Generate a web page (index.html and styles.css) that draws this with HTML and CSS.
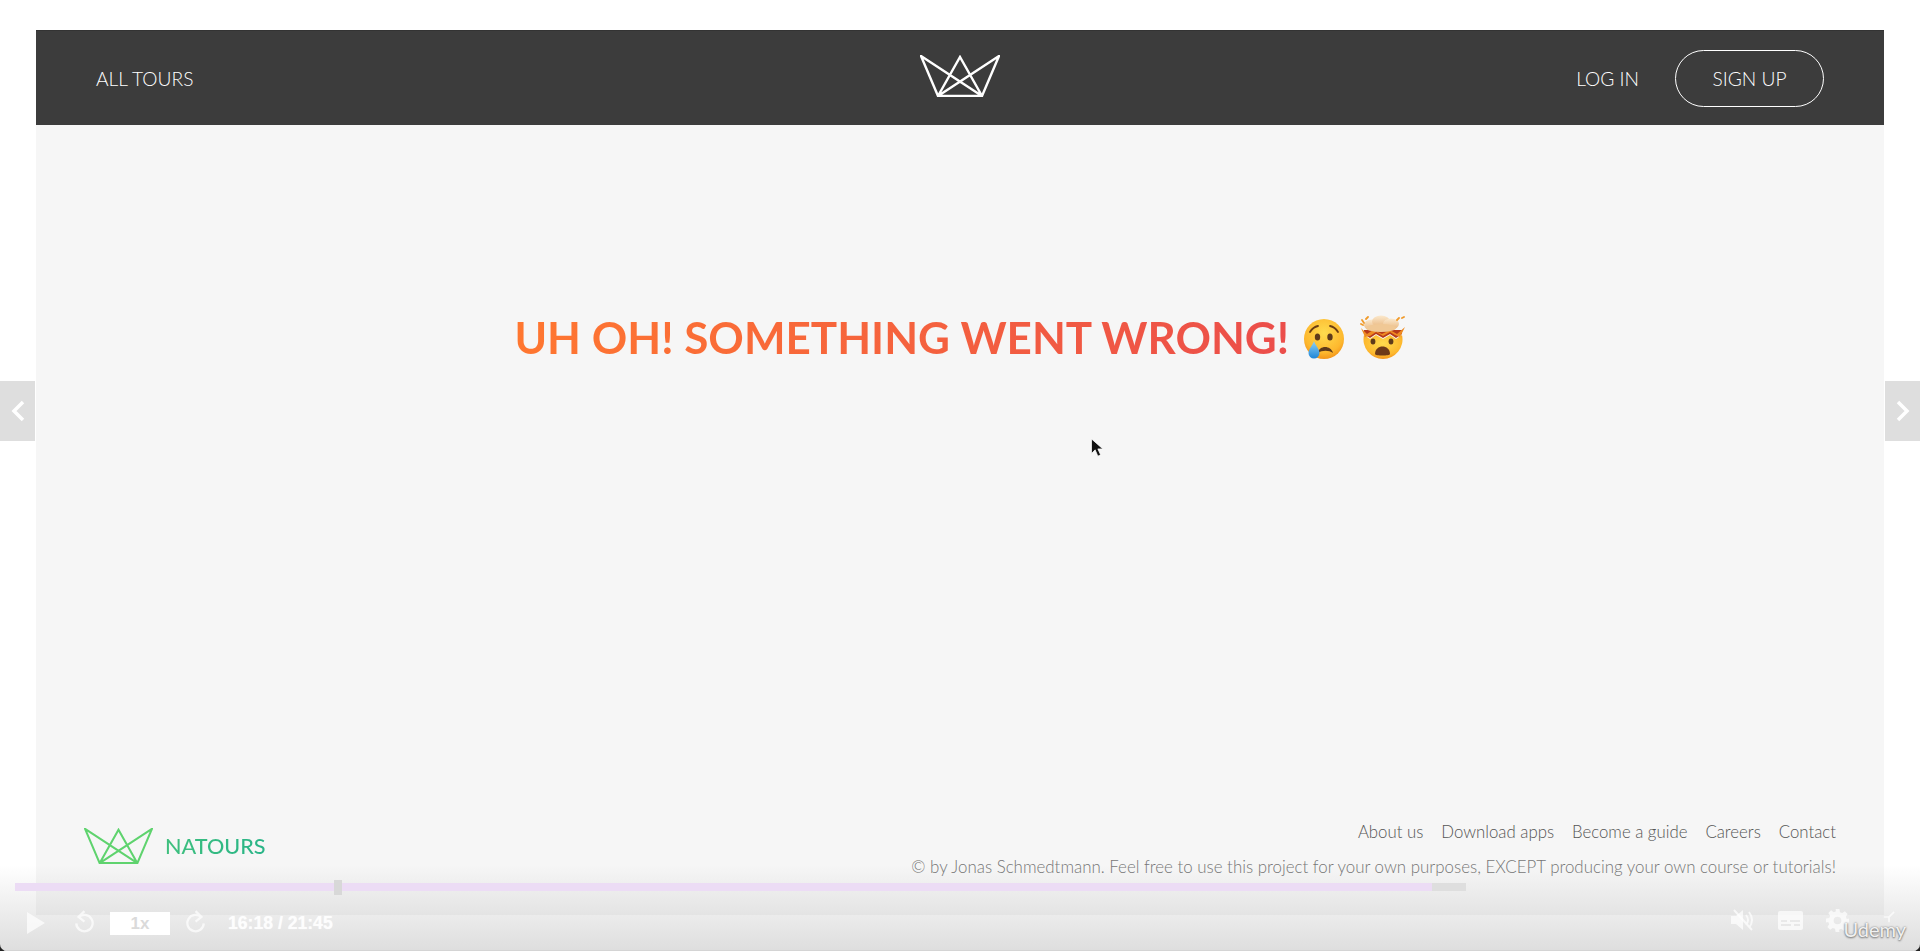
FILE: index.html
```html
<!DOCTYPE html>
<html lang="en">
<head>
<meta charset="utf-8">
<title>Natours | Something went wrong</title>
<link rel="stylesheet" href="styles.css">
</head>
<body>
<svg class="defs" width="0" height="0" aria-hidden="true">
  <defs>
    <symbol id="crown" viewBox="0 0 80 42">
      <path d="M1 1 18 41H62L79 1 18 41 40 2 62 41Z" fill="none" stroke="currentColor" stroke-width="2.400" stroke-linejoin="miter"/>
    </symbol>
    <radialGradient id="skin" cx=".5" cy=".35" r=".7">
      <stop offset="0" stop-color="#ffdc4e"/><stop offset=".7" stop-color="#fdb82e"/><stop offset="1" stop-color="#f08a14"/>
    </radialGradient>
    <linearGradient id="tear" x1="0" y1="0" x2="0" y2="1">
      <stop offset="0" stop-color="#8fd2f5"/><stop offset="1" stop-color="#1f86d8"/>
    </linearGradient>
    <linearGradient id="blast" x1="0" y1="0" x2="0" y2="1">
      <stop offset="0" stop-color="#fbe9cd"/><stop offset="1" stop-color="#e9b67e"/>
    </linearGradient>
  </defs>
</svg>

<div class="page">
  <header class="top">
    <a class="top-link">ALL TOURS</a>
    <svg class="top-logo"><use href="#crown"/></svg>
    <nav class="top-actions">
      <a class="top-link">LOG IN</a>
      <a class="top-link signup">SIGN UP</a>
    </nav>
  </header>

  <main class="main">
    <h2 class="error-title">UH OH! SOMETHING WENT WRONG!
      <svg class="emoji" viewBox="0 0 42 42" aria-hidden="true">
        <circle cx="21" cy="21" r="20" fill="url(#skin)"/>
        <path d="M7 14q3-5 8-6M35 14q-3-5-8-6" fill="none" stroke="#6b3d12" stroke-width="1.800" stroke-linecap="round"/>
        <ellipse cx="14.500" cy="19" rx="2.700" ry="3.600" fill="#5f3a1a"/>
        <ellipse cx="27" cy="19" rx="2.700" ry="3.600" fill="#5f3a1a"/>
        <path d="M15 35c1-8 13-8 15 0-4-3-11-3-15 0Z" fill="#5f3a1a"/>
        <path d="M11 23C10 27 5.500 31 5.500 35a5.500 5.500 0 0 0 11 0C16.500 31 12 27 11 23Z" fill="url(#tear)"/>
      </svg>
      <svg class="emoji emoji-wide" viewBox="0 0 46 44" aria-hidden="true">
        <path d="M4 20A19.500 19.500 0 1 0 42 20L36 24 30 20 23 24 16 20 10 24Z" fill="url(#skin)"/>
        <path d="M4 19 10 23 16 19 23 23 30 19 36 23 42 19 42 15 4 15Z" fill="#b6391a"/>
        <path d="M1 13 7 19 13 15 22 19 30 15 37 19 45 12 40 22 35 20 30 17 23 21 16 17 10 21 5 22Z" fill="#ee8a22"/>
        <ellipse cx="12" cy="10" rx="8" ry="5.500" fill="url(#blast)"/>
        <ellipse cx="21" cy="6.500" rx="9" ry="6" fill="url(#blast)"/>
        <ellipse cx="31" cy="9" rx="8" ry="5.500" fill="url(#blast)"/>
        <ellipse cx="21" cy="13" rx="15" ry="4" fill="#f0c895"/>
        <path d="M2 5l2 3M8 2 6 4M39 3l-2 2M44 2l-2 1M1 9l2 1" stroke="#f09a2a" stroke-width="1.800" stroke-linecap="round"/>
        <ellipse cx="13" cy="26.500" rx="2.400" ry="3" fill="#5f3a1a"/>
        <ellipse cx="31" cy="26.500" rx="2.400" ry="3" fill="#5f3a1a"/>
        <path d="M15 39c0-10 15-10 15 0 0 2-15 2-15 0Z" fill="#6e3a18"/>
      </svg>
    </h2>
  </main>

  <footer class="foot">
    <div class="foot-brand">
      <svg class="foot-logo"><use href="#crown"/></svg>
      <span class="foot-name">NATOURS</span>
    </div>
    <div class="foot-info">
      <ul class="foot-nav">
        <li>About us</li>
        <li>Download apps</li>
        <li>Become a guide</li>
        <li>Careers</li>
        <li>Contact</li>
      </ul>
      <p class="foot-copy">© by Jonas Schmedtmann. Feel free to use this project for your own purposes, EXCEPT producing your own course or tutorials!</p>
    </div>
  </footer>
</div>

<div class="side side-left">
  <svg viewBox="0 0 14 22" class="chev"><path d="M12 2 3 11l9 9" fill="none" stroke="currentColor" stroke-width="3.500"/></svg>
</div>
<div class="side side-right">
  <svg viewBox="0 0 14 22" class="chev"><path d="M2 2l9 9-9 9" fill="none" stroke="currentColor" stroke-width="3.500"/></svg>
</div>

<svg class="cursor" viewBox="0 0 14 22" aria-hidden="true"><path d="M1.500 1v16l4-4 3 7 3-1.500-3-6.500h5.500Z" fill="#111" stroke="#fff" stroke-width=".8"/></svg>

<div class="player">
  <div class="progress">
    <div class="progress-fill"></div>
    <div class="progress-handle"></div>
  </div>
  <div class="controls">
    <svg class="ctl ctl-play" viewBox="0 0 18 22"><path d="M0 0v22l18-11Z" fill="currentColor"/></svg>
    <svg class="ctl ctl-replay" viewBox="0 0 22 24"><path d="M5 7a9 9 0 1 1-2.500 6.500M11.500 0 5 6.500l6.500 5" fill="none" stroke="currentColor" stroke-width="2.500"/></svg>
    <div class="speed">1x</div>
    <svg class="ctl ctl-forward" viewBox="0 0 22 24"><path d="M17 7a9 9 0 1 0 2.500 6.500M10.500 0 17 6.500l-6.500 5" fill="none" stroke="currentColor" stroke-width="2.500"/></svg>
    <span class="time">16:18 / 21:45</span>
    <div class="controls-right">
      <svg class="ctl ctl-mute" viewBox="0 0 23 22"><path d="M0 7v8h5l7 6V1L5 7Z" fill="currentColor"/><path d="M15 6q4 5 0 10M18 3q6 8 0 16M3 1l18 20" fill="none" stroke="currentColor" stroke-width="2"/></svg>
      <svg class="ctl ctl-cc" viewBox="0 0 25 19"><path fill-rule="evenodd" d="M2 0h21a2 2 0 0 1 2 2v15a2 2 0 0 1-2 2H2a2 2 0 0 1-2-2V2a2 2 0 0 1 2-2ZM3 9v2h6V9Zm9 0v2h10V9ZM3 13v2h10v-2Zm13 0v2h6v-2Z" fill="currentColor"/></svg>
      <svg class="ctl ctl-gear" viewBox="0 0 24 24"><path fill-rule="evenodd" d="M10 0h4l.6 3.300 2.300 1 2.800-1.900 2.900 2.900-1.900 2.800 1 2.300L24 10v4l-3.300.6-1 2.300 1.900 2.800-2.900 2.900-2.800-1.900-2.300 1L14 24h-4l-.6-3.300-2.300-1-2.800 1.900-2.900-2.900 1.900-2.800-1-2.300L0 14v-4l3.300-.6 1-2.300-1.900-2.800 2.900-2.900 2.800 1.900 2.300-1ZM12 8a4 4 0 1 0 0 8 4 4 0 0 0 0-8Z" fill="currentColor"/></svg>
      <svg class="ctl ctl-full" viewBox="0 0 14 14"><path d="M13 1 6 8M1 7h6v6" fill="none" stroke="currentColor" stroke-width="2"/></svg>
    </div>
  </div>
  <span class="udemy">Udemy</span>
</div>
</body>
</html>
```
FILE: styles.css
```css
* { box-sizing: border-box; }

html, body { height: 100%; margin: 0; }

html { background: #222; }

body {
  position: relative;
  overflow: hidden;
  height: 951px;
  padding: 30px 36px 36px;
  background: #fff;
  border-radius: 0 0 7px 7px;
  font-family: Lato, "Liberation Sans", sans-serif;
}

.defs { position: absolute; }

.page {
  display: flex;
  flex-direction: column;
  height: 885px;
  background: #f6f6f6;
}

.top {
  display: grid;
  grid-template-columns: 1fr auto 1fr;
  align-items: center;
  flex: 0 0 95px;
  padding: 0 60px;
  background: #3c3c3c;
  border-top: 1px solid #333;
  color: #fff;
}

.top-link {
  font-size: 19.2px;
  font-weight: 300;
  color: #fff;
}

.top-logo {
  width: 80px;
  height: 42px;
  color: #fff;
  margin-top: -4px;
}

.top-actions {
  display: flex;
  justify-content: flex-end;
  align-items: center;
  gap: 36px;
}

.signup {
  display: flex;
  align-items: center;
  justify-content: center;
  width: 149px;
  height: 57px;
  border: 1px solid #fff;
  border-radius: 29px;
}

.main {
  flex: 1;
  display: flex;
  justify-content: center;
  padding-top: 179px;
}

.error-title {
  margin: 0;
  height: 66px;
  font-size: 44px;
  line-height: 66px;
  font-weight: 700;
  white-space: nowrap;
  background: linear-gradient(to right, #ff7730, #eb4d4b 88%);
  -webkit-background-clip: text;
  background-clip: text;
  color: transparent;
}

.emoji {
  width: 42px;
  height: 42px;
  margin-left: 3px;
  vertical-align: -6px;
}

.emoji-wide {
  width: 46px;
  height: 44px;
  margin-left: 4px;
  vertical-align: -5px;
}

.foot {
  display: flex;
  justify-content: space-between;
  padding: 0 48px 36px;
}

.foot-brand {
  display: flex;
  align-items: center;
  gap: 12px;
  height: 35px;
  margin-top: 8px;
}

.foot-logo {
  width: 69px;
  height: 36px;
  color: #5fd36e;
}

.foot-name {
  font-size: 21.6px;
  font-weight: 500;
  background: linear-gradient(to right, #3fc07e, #28b487);
  -webkit-background-clip: text;
  background-clip: text;
  color: transparent;
}

.foot-info {
  display: flex;
  flex-direction: column;
  align-items: flex-end;
  gap: 11px;
}

.foot-nav {
  display: flex;
  gap: 18px;
  margin: 0;
  padding: 0;
  list-style: none;
  font-size: 16.8px;
  font-weight: 300;
  line-height: 24px;
  color: #555;
}

.foot-copy {
  margin: 0;
  font-size: 16.9px;
  font-weight: 300;
  line-height: 24px;
  color: #777;
}

.side {
  position: absolute;
  top: 381px;
  display: flex;
  align-items: center;
  justify-content: center;
  width: 35px;
  height: 60px;
  background: #dedede;
  color: #fff;
}

.side-left { left: 0; }
.side-right { right: 0; }

.chev {
  width: 14px;
  height: 22px;
}

.cursor {
  position: absolute;
  left: 1090px;
  top: 438px;
  width: 13px;
  height: 20px;
}

.player {
  position: absolute;
  left: 0;
  right: 0;
  bottom: 0;
  height: 86px;
  padding: 18px 0 0 15px;
  background: linear-gradient(to bottom, rgba(90, 90, 90, 0), rgba(90, 90, 90, .2));
  border-bottom: 1px solid #d4d4d4;
  color: rgba(255, 255, 255, .7);
}

.progress {
  position: relative;
  width: 1451px;
  height: 8px;
  background: #dedede;
}

.progress-fill {
  height: 8px;
  width: 1417px;
  background: #ecdcf5;
}

.progress-handle {
  position: absolute;
  left: 319px;
  top: -3px;
  width: 8px;
  height: 15px;
  background: #d8d8d8;
}

.controls {
  display: flex;
  align-items: center;
  height: 30px;
  margin-top: 17px;
  padding-left: 12px;
}

.ctl { display: block; flex: none; }

.ctl-play { width: 18px; height: 22px; }

.ctl-replay { width: 20px; height: 24px; margin-left: 29px; margin-top: -3px; }

.speed {
  width: 60px;
  height: 23px;
  margin-left: 16px;
  background: #fff;
  color: #dadada;
  font: 700 17px/23px "Liberation Sans", sans-serif;
  text-align: center;
}

.ctl-forward { width: 20px; height: 24px; margin-left: 16px; margin-top: -3px; }

.time {
  margin-left: 22px;
  font: 700 17.6px/24px "Liberation Sans", sans-serif;
  color: rgba(255, 255, 255, .8);
  text-shadow: 0 0 1px rgba(255, 255, 255, .8);
}

.controls-right {
  display: flex;
  align-items: center;
  margin-left: auto;
  padding-right: 25px;
  margin-top: -6px;
}

.ctl-mute { width: 23px; height: 22px; margin-right: 1px; }
.ctl-cc { width: 25px; height: 19px; margin-left: 23px; }
.ctl-gear { width: 23px; height: 23px; margin-left: 23px; }
.ctl-full { width: 12px; height: 14px; margin-left: 34px; margin-top: -6px; }

.udemy {
  position: absolute;
  right: 14px;
  bottom: 9px;
  font: 400 20px/24px Lato, sans-serif;
  color: rgba(255, 255, 255, .9);
  text-shadow: 0 0 2px #777, 0 1px 2px #777;
}
```
